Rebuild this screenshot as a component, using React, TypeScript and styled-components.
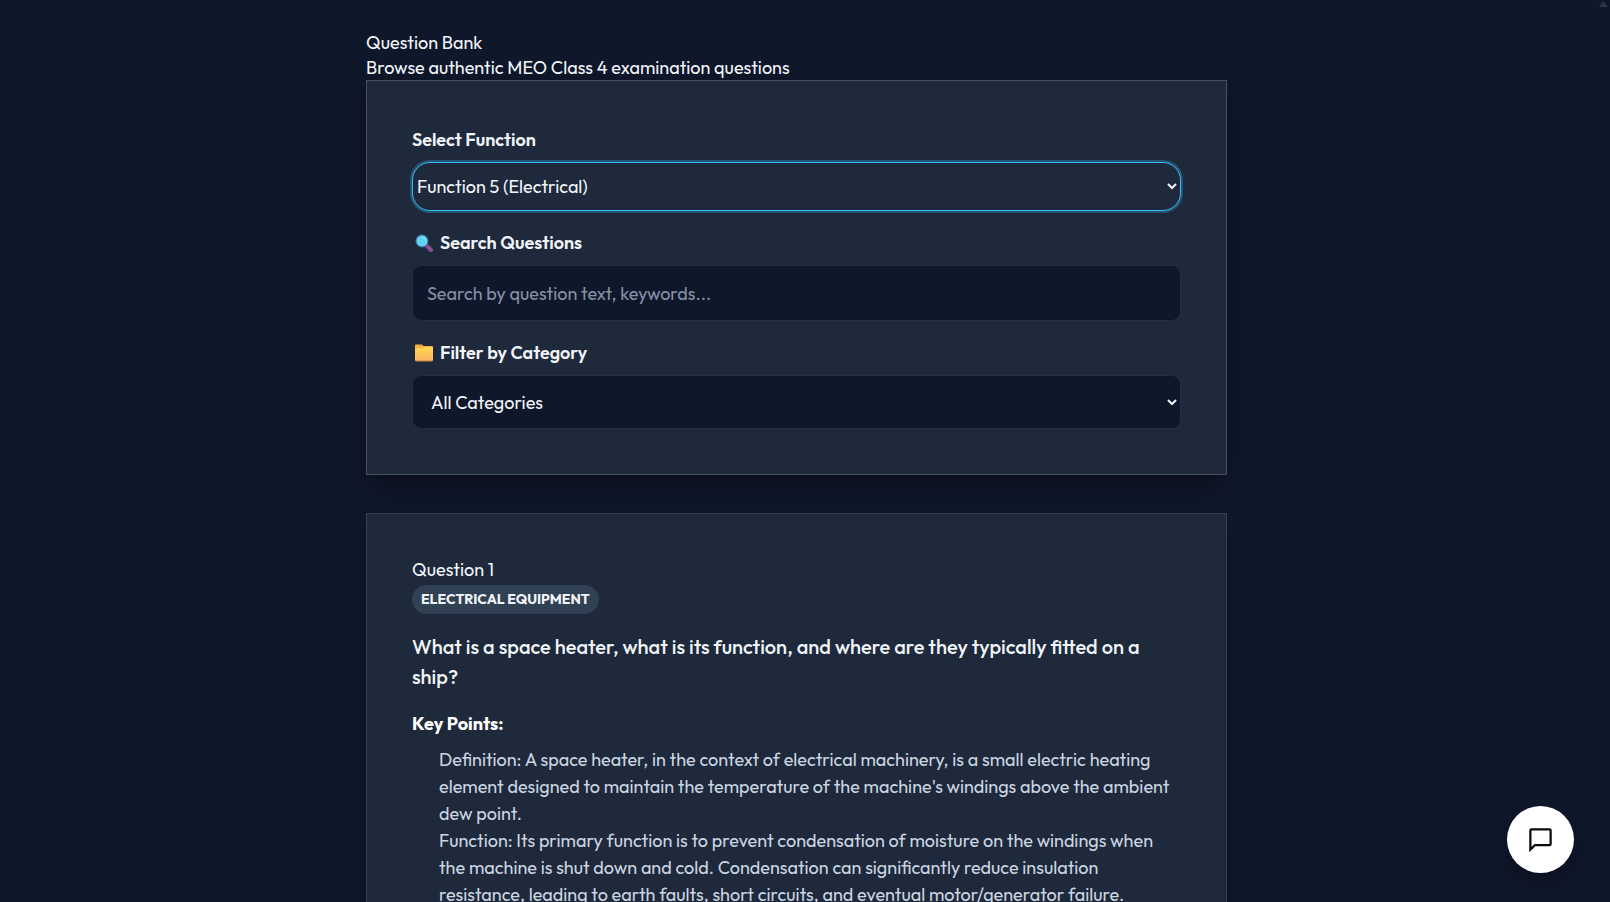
import { useState } from "react";
import styled, { createGlobalStyle } from "styled-components";

const GlobalStyle = createGlobalStyle`
  *, *::before, *::after { box-sizing: border-box; }
  body {
    margin: 0;
    background: #0f172a;
    color: #f1f5f9;
    font-family: Outfit, Lato, "Noto Sans", sans-serif;
    font-size: 18px;
    line-height: 25px;
  }
  h1, h2, h3, h4, p, ul { margin: 0; padding: 0; font: inherit; }
`;

const Page = styled.div`
  min-height: 100vh;
  padding: 30px 33px 36px 16px;
`;

const Content = styled.main`
  display: flex;
  flex-direction: column;
  gap: 38px;
  width: 100%;
  max-width: 861px;
  margin: 0 auto;
`;

const Panel = styled.section<{ $raised?: boolean }>`
  padding: 45px;
  background: #1e293b;
  border: 1px solid ${(p) => (p.$raised ? "#475160" : "#334155")};
  box-shadow: ${(p) =>
    p.$raised
      ? "0 10px 24px -4px rgba(0, 0, 0, 0.45)"
      : "0 4px 20px rgba(0, 0, 0, 0.15)"};
`;

const Filters = styled(Panel)`
  display: flex;
  flex-direction: column;
  gap: 18px;
`;

const Field = styled.div`
  display: flex;
  flex-direction: column;
  gap: 9px;
`;

const Label = styled.label`
  display: flex;
  align-items: center;
  gap: 7px;
  line-height: 27px;
  font-weight: 600;

  svg { flex: none; margin-left: 3px; }
`;

const FunctionSelect = styled.select`
  width: 100%;
  height: 49px;
  padding: 0;
  border: 1px solid #38bdf8;
  border-radius: 18px;
  outline: none;
  background: #1e293b;
  box-shadow: 0 0 0 2px rgba(56, 189, 248, 0.3);
  color: #f1f5f9;
  font: inherit;
`;

const SearchInput = styled.input`
  width: 100%;
  height: 56px;
  padding: 0 14px;
  border: 1px solid #242f42;
  border-radius: 9px;
  background: #0f172a;
  color: #f1f5f9;
  font: inherit;

  &::placeholder { color: #8491a5; opacity: 1; }
`;

const CategorySelect = styled.select`
  width: 100%;
  height: 54px;
  padding: 0 0 0 14px;
  border: 1px solid #242f42;
  border-radius: 9px;
  background: #0f172a;
  color: #f1f5f9;
  font: inherit;
`;

const QuestionNumber = styled.h2`
  && { line-height: 22px; }
`;

const Badge = styled.span`
  display: block;
  width: fit-content;
  margin-top: 4px;
  padding: 0 9px;
  border-radius: 15px;
  background: #304153;
  font-size: 14px;
  line-height: 29px;
  font-weight: 700;
  text-transform: uppercase;
`;

const QuestionText = styled.h3`
  && {
    margin: 18px 0;
    font-size: 20px;
    line-height: 30px;
    font-weight: 500;
  }
`;

const KeyPointsTitle = styled.h4`
  && {
    line-height: 27px;
    font-weight: 700;
  }
  color: #ffffff;
`;

const KeyPoints = styled.ul`
  && {
    margin-top: 9px;
    padding-left: 27px;
    line-height: 27px;
  }
  list-style: none;
  color: #cbd5e1;
`;

const ChatButton = styled.button`
  position: fixed;
  right: 36px;
  bottom: 29px;
  display: flex;
  align-items: center;
  justify-content: center;
  width: 67px;
  height: 67px;
  padding: 0;
  border: 0;
  border-radius: 50%;
  background: #ffffff;
  color: #0b0b0b;
  box-shadow: 0 8px 20px rgba(0, 0, 0, 0.3);
`;

const ScrollArrow = styled.svg`
  position: fixed;
  top: 0;
  right: 2px;
`;

const SearchIcon = () => (
  <svg width="18" height="18" viewBox="0 0 18 18" aria-hidden="true">
    <path d="M12 12 L16 16" stroke="#86508f" strokeWidth="4" strokeLinecap="round" />
    <circle cx="7" cy="7" r="6" fill="#62d3ee" stroke="#4a6ca8" strokeWidth="1" />
    <path d="M7.5 3.5 Q10 4 10.5 6.5" stroke="#9be8f7" strokeWidth="1" fill="none" />
  </svg>
);

const FolderIcon = () => (
  <svg width="18" height="18" viewBox="0 0 18 18" aria-hidden="true">
    <defs>
      <linearGradient id="folder" x1="0" y1="0" x2="0" y2="1">
        <stop offset="0" stopColor="#ffd94f" />
        <stop offset="1" stopColor="#fbb264" />
      </linearGradient>
    </defs>
    <path d="M0 1.5 Q0 .5 1 .5 H7 L8.5 2 H17 Q18 2 18 3 V8 H0Z" fill="#f3b13f" />
    <path d="M0 4.5 H7.5 L9 3 H18 V16 Q18 17 17 17 H1 Q0 17 0 16Z" fill="url(#folder)" />
    <path d="M.5 17 H17.5" stroke="#c4853f" strokeWidth="1" />
  </svg>
);

const ChatIcon = () => (
  <svg
    width="27"
    height="27"
    viewBox="0 0 24 24"
    fill="none"
    stroke="currentColor"
    strokeWidth="2"
    strokeLinecap="square"
    aria-hidden="true"
  >
    <path d="M21 16a1 1 0 0 1-1 1H7l-4 4V4a1 1 0 0 1 1-1h16a1 1 0 0 1 1 1z" />
  </svg>
);

const points = [
  "Definition: A space heater, in the context of electrical machinery, is a small electric heating element designed to maintain the temperature of the machine's windings above the ambient dew point.",
  "Function: Its primary function is to prevent condensation of moisture on the windings when the machine is shut down and cold. Condensation can significantly reduce insulation resistance, leading to earth faults, short circuits, and eventual motor/generator failure.",
];

export default function App() {
  const [query, setQuery] = useState("");
  return (
    <>
      <GlobalStyle />
      <Page>
        <Content>
          <div>
            <header>
              <h1>Question Bank</h1>
              <p>Browse authentic MEO Class 4 examination questions</p>
            </header>
            <Filters $raised>
              <Field>
                <Label htmlFor="function">Select Function</Label>
                <FunctionSelect id="function">
                  <option>Function 5 (Electrical)</option>
                </FunctionSelect>
              </Field>
              <Field>
                <Label htmlFor="search"><SearchIcon />Search Questions</Label>
                <SearchInput
                  id="search"
                  type="text"
                  placeholder="Search by question text, keywords..."
                  value={query}
                  onChange={(e) => setQuery(e.target.value)}
                />
              </Field>
              <Field>
                <Label htmlFor="category"><FolderIcon />Filter by Category</Label>
                <CategorySelect id="category">
                  <option>All Categories</option>
                </CategorySelect>
              </Field>
            </Filters>
          </div>
          <Panel as="article">
            <QuestionNumber>Question 1</QuestionNumber>
            <Badge>Electrical Equipment</Badge>
            <QuestionText>
              What is a space heater, what is its function, and where are they typically fitted on a ship?
            </QuestionText>
            <KeyPointsTitle>Key Points:</KeyPointsTitle>
            <KeyPoints>
              {points.map((point) => <li key={point}>{point}</li>)}
            </KeyPoints>
          </Panel>
        </Content>
      </Page>
      <ChatButton type="button" aria-label="Open chat"><ChatIcon /></ChatButton>
      <ScrollArrow width="9" height="7" viewBox="0 0 9 7" aria-hidden="true">
        <path d="M4.5 1 L9 7 H0Z" fill="#2a3446" />
      </ScrollArrow>
    </>
  );
}
